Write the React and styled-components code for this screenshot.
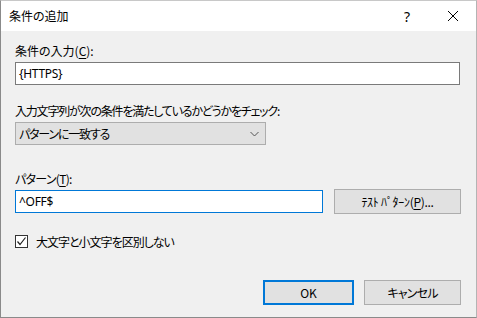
import React from 'react';
import styled, { createGlobalStyle } from 'styled-components';

const GlobalStyle = createGlobalStyle`
  html, body {
    margin: 0;
    padding: 0;
    background: #ffffff;
  }
  body {
    font-family: "Noto Sans CJK JP", "Noto Sans", sans-serif;
    font-size: 12px;
    color: #000;
    font-feature-settings: "palt";
  }
`;

const Window = styled.div`
  width: 477px;
  height: 318px;
  box-sizing: border-box;
  border: 1px solid #8a8a8a;
  border-top-color: #c8c8c8;
  border-right-color: #b4b4b4;
  display: flex;
  flex-direction: column;
  background: #f0f0f0;
`;

const TitleBar = styled.div`
  height: 30px;
  background: #ffffff;
  display: flex;
  align-items: center;
  padding-left: 8px;
  flex-shrink: 0;
`;

const Title = styled.div`
  flex: 1;
  font-size: 12px;
  line-height: 16px;
`;

const TitleButton = styled.div`
  width: 46px;
  height: 30px;
  display: flex;
  align-items: center;
  justify-content: center;
  font-family: "Noto Sans", sans-serif;
  font-size: 14px;
  color: #000;
`;

const Content = styled.div`
  flex: 1;
  display: flex;
  flex-direction: column;
  padding: 12px 0 0 14px;
`;

const Label = styled.div`
  line-height: 16px;
  height: 16px;
  margin-top: ${({ $top }) => $top || 0}px;
  margin-bottom: ${({ $bottom }) => $bottom ?? 3}px;
  letter-spacing: ${({ $ls }) => $ls || 0}px;
  white-space: nowrap;
`;

const Key = styled.span`
  text-decoration: underline;
  text-underline-offset: 2px;
`;

const TextBox = styled.div`
  width: ${({ $w }) => $w}px;
  height: 23px;
  box-sizing: border-box;
  background: #ffffff;
  border: 1px solid ${({ $focused }) => ($focused ? '#0078d7' : '#7a7a7a')};
  display: flex;
  align-items: center;
  padding-left: 3px;
  font-family: "Noto Sans", "Noto Sans CJK JP", sans-serif;
  font-size: 12px;
  letter-spacing: -0.3px;
`;

const Combo = styled.div`
  width: 251px;
  height: 23px;
  box-sizing: border-box;
  background: #e1e1e1;
  border: 1px solid #adadad;
  display: flex;
  align-items: center;
  justify-content: space-between;
  padding: 0 6px 0 3px;
  letter-spacing: -1.2px;
`;

const Row = styled.div`
  display: flex;
  align-items: center;
  gap: ${({ $gap }) => $gap || 0}px;
`;

const Button = styled.div`
  width: ${({ $w }) => $w}px;
  height: ${({ $h }) => $h || 25}px;
  box-sizing: border-box;
  background: #e1e1e1;
  border: ${({ $primary }) => ($primary ? '2px solid #0078d7' : '1px solid #adadad')};
  display: flex;
  align-items: center;
  justify-content: center;
  white-space: nowrap;
  letter-spacing: ${({ $ls }) => $ls || 0}px;
`;

const CheckRow = styled.div`
  display: flex;
  align-items: center;
  gap: 8px;
  margin-top: 19px;
  height: 16px;
  letter-spacing: -1px;
`;

const CheckBox = styled.div`
  width: 13px;
  height: 13px;
  box-sizing: border-box;
  border: 1px solid #333333;
  background: #ffffff;
  display: flex;
  align-items: center;
  justify-content: center;
`;

const Footer = styled.div`
  display: flex;
  justify-content: flex-end;
  gap: 10px;
  padding-right: 15px;
  margin-top: 31px;
`;

const Chevron = () => (
  <svg width="9" height="6" viewBox="0 0 9 6">
    <polyline points="0.5,1 4.5,5 8.5,1" fill="none" stroke="#555" strokeWidth="1" />
  </svg>
);

const Check = () => (
  <svg width="11" height="11" viewBox="0 0 11 11">
    <polyline points="1.5,5.5 4,8.5 9.5,1.5" fill="none" stroke="#222" strokeWidth="1.2" />
  </svg>
);

const CloseIcon = () => (
  <svg width="12" height="12" viewBox="0 0 12 12">
    <path d="M1 1 L11 11 M11 1 L1 11" stroke="#000" strokeWidth="1" />
  </svg>
);

export default function App() {
  return (
    <>
      <GlobalStyle />
      <Window>
        <TitleBar>
          <Title>条件の追加</Title>
          <TitleButton>?</TitleButton>
          <TitleButton>
            <CloseIcon />
          </TitleButton>
        </TitleBar>
        <Content>
          <Label>
            条件の入力(<Key>C</Key>):
          </Label>
          <TextBox $w={445}>{'{HTTPS}'}</TextBox>

          <Label $top={18} $ls={-1.2}>
            入力文字列が次の条件を満たしているかどうかをチェック:
          </Label>
          <Combo>
            <span>パターンに一致する</span>
            <Chevron />
          </Combo>

          <Label $top={26} $bottom={2} $ls={-0.7}>
            パターン(<Key>T</Key>):
          </Label>
          <Row $gap={11}>
            <TextBox $w={308} $focused>
              ^OFF$
            </TextBox>
            <Button $w={127} $ls={-0.3}>
              ﾃｽﾄ ﾊﾟﾀｰﾝ(<Key>P</Key>)...
            </Button>
          </Row>

          <CheckRow>
            <CheckBox>
              <Check />
            </CheckBox>
            <span>大文字と小文字を区別しない</span>
          </CheckRow>

          <Footer>
            <Button $w={91} $primary>
              OK
            </Button>
            <Button $w={97} $ls={-0.8}>
              キャンセル
            </Button>
          </Footer>
        </Content>
      </Window>
    </>
  );
}
